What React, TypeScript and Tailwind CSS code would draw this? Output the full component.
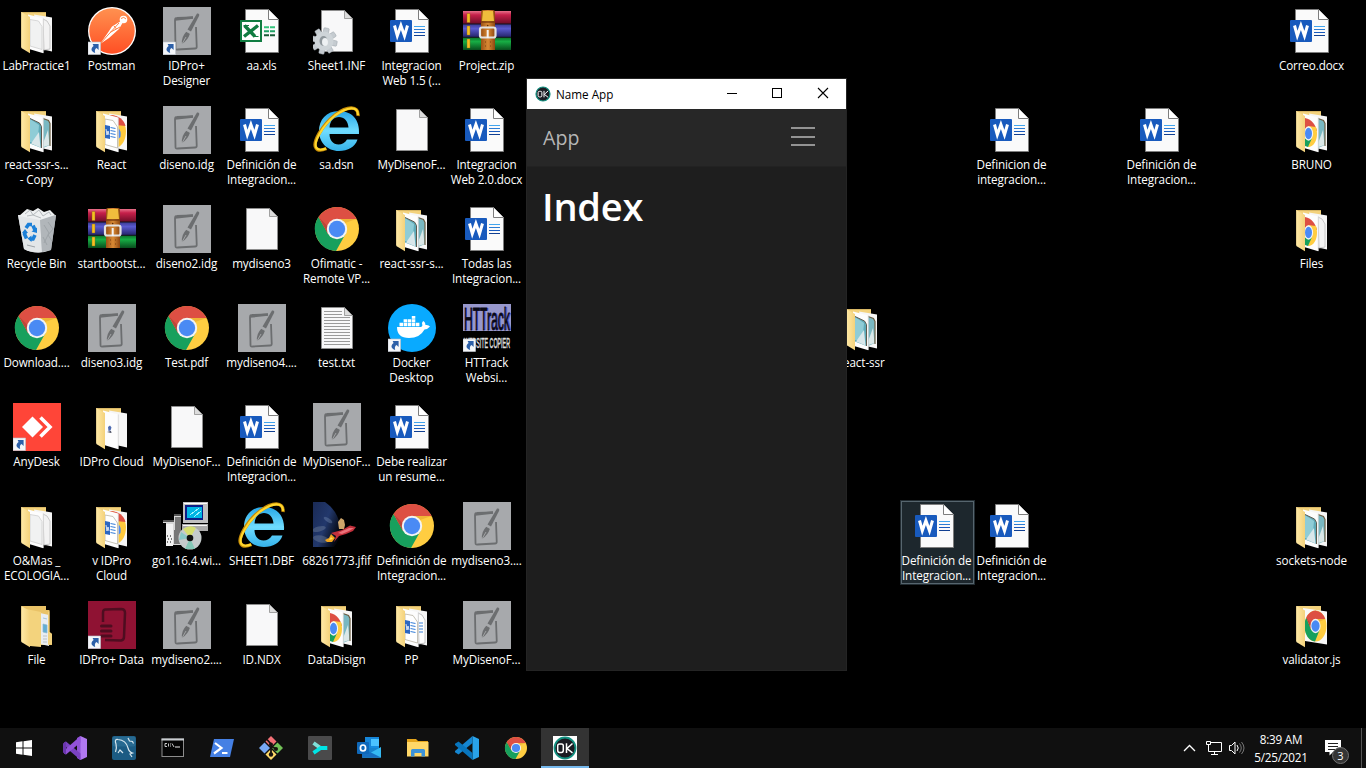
import React from "react";

type IconKind =
  | "folder" | "folderPics" | "folderMix" | "folderChrome" | "folderChromeBlank" | "folderOneChrome" | "folderDb" | "folderWord" | "folderFull"
  | "postman" | "idg" | "idgLink" | "excel" | "inf" | "word" | "rar" | "ie" | "page" | "bin" | "chrome"
  | "text" | "docker" | "httrack" | "anydesk" | "installer" | "photo" | "idproData";

type Item = { c: number; r: number; icon: IconKind; lines: string[]; selected?: boolean };

const items: Item[] = [
  { c: 0, r: 0, icon: "folder", lines: ["LabPractice1"] },
  { c: 1, r: 0, icon: "postman", lines: ["Postman"] },
  { c: 2, r: 0, icon: "idgLink", lines: ["IDPro+", "Designer"] },
  { c: 3, r: 0, icon: "excel", lines: ["aa.xls"] },
  { c: 4, r: 0, icon: "inf", lines: ["Sheet1.INF"] },
  { c: 5, r: 0, icon: "word", lines: ["Integracion", "Web 1.5 (..."] },
  { c: 6, r: 0, icon: "rar", lines: ["Project.zip"] },
  { c: 17, r: 0, icon: "word", lines: ["Correo.docx"] },
  { c: 0, r: 1, icon: "folderPics", lines: ["react-ssr-s...", "- Copy"] },
  { c: 1, r: 1, icon: "folderMix", lines: ["React"] },
  { c: 2, r: 1, icon: "idg", lines: ["diseno.idg"] },
  { c: 3, r: 1, icon: "word", lines: ["Definición de", "Integracion..."] },
  { c: 4, r: 1, icon: "ie", lines: ["sa.dsn"] },
  { c: 5, r: 1, icon: "page", lines: ["MyDisenoF..."] },
  { c: 6, r: 1, icon: "word", lines: ["Integracion", "Web 2.0.docx"] },
  { c: 13, r: 1, icon: "word", lines: ["Definicion de", "integracion..."] },
  { c: 15, r: 1, icon: "word", lines: ["Definición de", "Integracion..."] },
  { c: 17, r: 1, icon: "folderChrome", lines: ["BRUNO"] },
  { c: 0, r: 2, icon: "bin", lines: ["Recycle Bin"] },
  { c: 1, r: 2, icon: "rar", lines: ["startbootst..."] },
  { c: 2, r: 2, icon: "idg", lines: ["diseno2.idg"] },
  { c: 3, r: 2, icon: "page", lines: ["mydiseno3"] },
  { c: 4, r: 2, icon: "chrome", lines: ["Ofimatic -", "Remote VP..."] },
  { c: 5, r: 2, icon: "folderPics", lines: ["react-ssr-s..."] },
  { c: 6, r: 2, icon: "word", lines: ["Todas las", "Integracion..."] },
  { c: 17, r: 2, icon: "folderChromeBlank", lines: ["Files"] },
  { c: 0, r: 3, icon: "chrome", lines: ["Download...."] },
  { c: 1, r: 3, icon: "idg", lines: ["diseno3.idg"] },
  { c: 2, r: 3, icon: "chrome", lines: ["Test.pdf"] },
  { c: 3, r: 3, icon: "idg", lines: ["mydiseno4...."] },
  { c: 4, r: 3, icon: "text", lines: ["test.txt"] },
  { c: 5, r: 3, icon: "docker", lines: ["Docker", "Desktop"] },
  { c: 6, r: 3, icon: "httrack", lines: ["HTTrack", "Websi..."] },
  { c: 11, r: 3, icon: "folderPics", lines: ["react-ssr"] },
  { c: 0, r: 4, icon: "anydesk", lines: ["AnyDesk"] },
  { c: 1, r: 4, icon: "folderDb", lines: ["IDPro Cloud"] },
  { c: 2, r: 4, icon: "page", lines: ["MyDisenoF..."] },
  { c: 3, r: 4, icon: "word", lines: ["Definición de", "Integracion..."] },
  { c: 4, r: 4, icon: "idg", lines: ["MyDisenoF..."] },
  { c: 5, r: 4, icon: "word", lines: ["Debe realizar", "un resume..."] },
  { c: 0, r: 5, icon: "folder", lines: ["O&Mas _", "ECOLOGIA..."] },
  { c: 1, r: 5, icon: "folderMix", lines: ["v IDPro", "Cloud"] },
  { c: 2, r: 5, icon: "installer", lines: ["go1.16.4.wi..."] },
  { c: 3, r: 5, icon: "ie", lines: ["SHEET1.DBF"] },
  { c: 4, r: 5, icon: "photo", lines: ["68261773.jfif"] },
  { c: 5, r: 5, icon: "chrome", lines: ["Definición de", "Integracion..."] },
  { c: 6, r: 5, icon: "idg", lines: ["mydiseno3...."] },
  { c: 12, r: 5, icon: "word", lines: ["Definición de", "Integracion..."], selected: true },
  { c: 13, r: 5, icon: "word", lines: ["Definición de", "Integracion..."] },
  { c: 17, r: 5, icon: "folderPics", lines: ["sockets-node"] },
  { c: 0, r: 6, icon: "folderFull", lines: ["File"] },
  { c: 1, r: 6, icon: "idproData", lines: ["IDPro+ Data"] },
  { c: 2, r: 6, icon: "idg", lines: ["mydiseno2...."] },
  { c: 3, r: 6, icon: "page", lines: ["ID.NDX"] },
  { c: 4, r: 6, icon: "folderChrome", lines: ["DataDisign"] },
  { c: 5, r: 6, icon: "folderWord", lines: ["PP"] },
  { c: 6, r: 6, icon: "idg", lines: ["MyDisenoF..."] },
  { c: 17, r: 6, icon: "folderOneChrome", lines: ["validator.js"] },
];

function Shortcut() {
  return (
    <g>
      <rect x="0" y="35" width="12.6" height="12.6" fill="#f4f6f9" stroke="#b9c0c9" strokeWidth="0.6" />
      <path d="M4.600 37h6v6l-2-1.900c-1.700 1-2.100 2.500-1.400 4.900-3.600-.9-5.300-4-1.600-6.900z" fill="#2c5fa8" />
    </g>
  );
}

function ChromeBall({ r = 22 }: { r?: number }) {
  return (
    <g transform={`scale(${r / 22})`}>
      <circle r="22" fill="#ffcd41" />
      <path d="M-18.500 -12A22 22 0 0 0 -1 21.980L8.500 5 0 9-9 4.500z" fill="#17a05d" />
      <path d="M-18.500 -12A22 22 0 0 1 19.500 -10L0 -10-9 5z" fill="#dd4f43" />
      <path d="M0 -10H19.500L8 -6z" fill="#e4a52e" opacity=".6" />
      <path d="M-18.500 -12L-9 5-8.500 -2z" fill="#9c3b32" opacity=".5" />
      <circle r="10.200" fill="#f3f3f3" />
      <circle r="8.200" fill="#4a8af4" />
    </g>
  );
}

function Gear() {
  return (
    <g transform="translate(11 34)">
      {[0, 45, 90, 135, 180, 225, 270, 315].map((a) => (
        <rect key={a} x="-2.700" y="-13.200" width="5.400" height="7" rx="1" fill="#c5cbd0" stroke="#8e979e" strokeWidth=".4" transform={`rotate(${a + 12})`} />
      ))}
      <circle r="9.500" fill="#ced4d8" />
      <ellipse cx="-.5" rx="4" ry="5" fill="#8f979c" />
      <ellipse cx="1" cy="1" rx="3" ry="4" fill="#eef1f3" />
    </g>
  );
}

function Page({ children }: { children?: React.ReactNode }) {
  return (
    <g>
      <path d="M8.500 3.500H31.500L39.500 11.500V44.500H8.500z" fill="#f8f8f9" stroke="#8d8d8d" />
      <path d="M31.500 3.500V11.500H39.500z" fill="#dcdcdc" stroke="#8d8d8d" strokeWidth=".8" />
      {children}
    </g>
  );
}

function OfficePage({ children }: { children: React.ReactNode }) {
  return (
    <g>
      <path d="M7.500 2.500H30.500L40.500 12.500V45.500H7.500z" fill="#fafafa" stroke="#7d7d7d" />
      <path d="M30.500 2.500V12.500H40.500" fill="#fff" stroke="#7d7d7d" />
      {children}
    </g>
  );
}

function Folder({ front, back }: { front?: React.ReactNode; back?: React.ReactNode }) {
  return (
    <g>
      <path d="M8.300 5H33V40H8.300z" fill="#f3d27c" />
      <path d="M8.300 5.500H33" stroke="#d9b765" strokeWidth="1" />
      <path d="M21 7.500L39 10.500V44.500L28 42z" fill="#f6f6f6" />
      {back}
      <path d="M15 7.500L30.300 11.500V46.300L16 42z" fill="#fdfdfd" />
      <path d="M30.300 11.500V46" stroke="#cfcfcf" strokeWidth=".7" />
      {front}
      <path d="M8.300 5L17 10V46.300L8.300 41z" fill="url(#flap)" />
    </g>
  );
}

const miniWord = (
  <g>
    <path d="M17 13L25 14.500 29.500 21V42L17 38.500z" fill="#fff" stroke="#b9b4a4" strokeWidth=".8" />
    <path d="M17 19L22 20V33L17 32z" fill="#2c66c0" />
    <path d="M18 23l1 6 1-4 1 4" fill="none" stroke="#fff" strokeWidth=".8" />
    <path d="M22.500 21.500l5 1M22.500 24.500l5 1M22.500 27.500l5 1M22.500 30.500l5 1" stroke="#3c82d8" strokeWidth="1.200" />
  </g>
);
const miniPics = (
  <g>
    <path d="M17 12.500L26.500 17 28.500 20.500V42L17 37.500z" fill="#5faab8" />
    <path d="M17 13L26 19 24.500 37 17 36z" fill="#8fccd6" />
    <path d="M26 26L18 37.500 27.500 41.500z" fill="#d9e7ea" />
    <path d="M17 12.500L26.500 17 28.500 20.500V42" fill="none" stroke="#5f5a4e" strokeWidth="1" />
  </g>
);
const miniPicsBack = (
  <g>
    <path d="M30 12.500L35.500 14.500 37 17.500V39L30 42z" fill="#79b8c2" />
    <path d="M35 24L30.500 36V41L36.500 39z" fill="#dbe8e8" />
    <path d="M30 12.500L35.500 14.500 37 17.500V40" fill="none" stroke="#6b5c40" strokeWidth="1.200" />
  </g>
);
const miniPage = <path d="M17 12.500L25.500 14 29 19.500V42.500L17 39z" fill="#f1f2f2" stroke="#cfcfcf" strokeWidth=".8" />;
const miniPageBack = <path d="M30 12L34 14 37 19V42L31 43z" fill="#f3f3f3" stroke="#bdbdbd" strokeWidth=".8" />;
const halfChrome = (
  <g>
    <path d="M17 12C24 13 28 20 29 25H17z" fill="#dd4f43" />
    <path d="M20 20L28 21C31 31 27 41 20 41z" fill="#ffcd41" />
    <path d="M17 27L24 32 20 41 17 40z" fill="#17a05d" />
    <ellipse cx="20.500" cy="27.500" rx="4.600" ry="7.200" fill="#f4f4f4" />
    <ellipse cx="20.500" cy="27.500" rx="3.500" ry="5.800" fill="#4a8af4" />
  </g>
);

function RecycleBin() {
  return (
    <g>
      <path d="M5 10L43 10 38 45Q24 51 11 44z" fill="#c5c9cd" />
      <path d="M5 10L27 14 29 47Q18 48 11 44z" fill="#e3e6e8" />
      <path d="M27 14L43 10 38 45 29 47z" fill="#b1b6ba" />
      <path d="M6 11L14 4 20 6 25 3 31 7 37 5 42 10 27 15z" fill="#eef0f1" />
      <path d="M12 9L17 5 20 10 26 5 30 11 36 7 38 10M14 11L20 10 28 13" stroke="#b5babd" strokeWidth="1" fill="none" />
      <path d="M35 17L40 24 35 30 39 36M31 20L36 28 31 38M14 40L22 42M34 40L30 32" stroke="#9ea4a8" fill="none" />
      <g fill="none" stroke="#1c80d8" strokeWidth="3.600">
        <path d="M13 23L15.500 19.500H19" />
        <path d="M20 20.500L22 25" />
        <path d="M22 30L20 34H17" />
        <path d="M13.500 33.500L11.500 29 12.500 27" />
      </g>
      <path d="M18.500 37L14.500 33.500 18.500 30.500zM18.500 26.500L24 28 24 22.500zM9 28L12 24 15 28z" fill="#1c80d8" />
    </g>
  );
}

function Rar() {
  return (
    <g>
      <rect y="4" width="48" height="13" fill="url(#rarR)" />
      <rect y="17" width="48" height="13" fill="url(#rarB)" />
      <rect y="30" width="48" height="13" fill="url(#rarG)" />
      <path d="M0 17H48M0 30.300H48" stroke="#13131c" strokeWidth="1" />
      <path d="M4 6.500h3v9H4zM4 19h3v9H4zM4 32h3v9H4z" fill="#f6c021" stroke="#8b6a14" strokeWidth=".4" />
      <path d="M18 5Q18 3 20 3H30Q32 3 32 5V43H18z" fill="url(#strap)" />
      <path d="M20 4h10l1 10H19z" fill="#f0bd3c" />
      <path d="M18 15h14" stroke="#7a3d0e" strokeWidth="1.400" />
      <rect x="17" y="20.500" width="15.500" height="10" rx="2" fill="none" stroke="#e2e2e2" strokeWidth="2.200" />
      <path d="M24.700 23v8" stroke="#f3f3f3" strokeWidth="2" />
      <circle cx="24.700" cy="18.500" r=".8" fill="#5b2c0a" />
      <path d="M22 35h1M27 35h1M22 39h1M27 39h1" stroke="#7b400f" />
    </g>
  );
}

function IE() {
  return (
    <g>
      <path
        fillRule="evenodd"
        d="M46 28C47 14 39 5 26 5S6 14 6 25 14 45 26 45C35 45 42 41 44.500 33.500H34C32 37 29 38.500 25.500 38.500 20 38.500 16.500 34 16.500 28zM16.500 21.500C17 14.500 21 11 26 11S35 15 35.500 21.500z"
        fill="url(#ieBlue)"
      />
      <path d="M45 10C46 -1 34 0 22 9 9 19 -1 37 3 42 5 45 9 44.500 13.500 42.500" fill="none" stroke="#c48a05" strokeWidth="3.400" />
      <path d="M45 9C45 -1 34 1 22 9.500 9 20 0 37 3.500 42 5 44 9 44 13 42.500" fill="none" stroke="#ffd62d" strokeWidth="2.200" />
    </g>
  );
}

function Idg({ link }: { link?: boolean }) {
  return (
    <g>
      <rect width="48" height="48" fill="#a7a9ac" />
      <path d="M30 10.500L14 11Q12 11 12 13.500L12.500 41Q12.500 43 14.500 42.500L32 41.500Q34 41.500 33.700 39L33 20" fill="none" stroke="#6c6e70" strokeWidth="1.800" />
      <path d="M12 12.500L30 10.500" stroke="#6c6e70" strokeWidth="2.600" />
      <path d="M34 6.500Q37 6 36 9L28 24.500 24.500 22.500z" fill="#6c6e70" />
      <path d="M23.500 24.500L27 26.500Q25 33 19 37Q18 30 23.500 24.500z" fill="#6c6e70" />
      <path d="M19 37L23 30M22.500 24L28 27" stroke="#a7a9ac" strokeWidth=".9" />
      {link && <Shortcut />}
    </g>
  );
}

const icons: Record<IconKind, React.ReactNode> = {
  folder: <Folder front={miniPage} back={miniPageBack} />,
  folderPics: <Folder front={miniPics} back={miniPicsBack} />,
  folderMix: (
    <Folder
      front={miniWord}
      back={
        <g>
          <path d="M21 9C31 9 38 16 38 25S34 40 30 41V20z" fill="#ffc93c" />
          <path d="M22 9C31 9 36 14 37.500 20L28 19z" fill="#dd4f43" />
          <path d="M30.300 22Q33.500 25 32.500 31L30.300 33z" fill="#4a8af4" />
        </g>
      }
    />
  ),
  folderChrome: <Folder front={halfChrome} back={miniPicsBack} />,
  folderChromeBlank: <Folder front={halfChrome} back={miniPageBack} />,
  folderOneChrome: (
    <g>
      <path d="M8.300 5H33V40H8.300z" fill="#f3d27c" />
      <path d="M15 7L39 10.500V43.500L17 40z" fill="#f8f8f8" />
      <g transform="translate(27.500 25) scale(.5 .7)"><ChromeBall /></g>
      <path d="M8.300 5L17 9.500V46.300L8.300 41z" fill="url(#flap)" />
    </g>
  ),
  folderDb: (
    <Folder front={<g><path d="M20 24l2-1.500 1.500 2-1 3-2 .5z" fill="#4d6bb2" /><path d="M19 29l4-1 .5 2z" fill="#3b3f55" /></g>} />
  ),
  folderWord: (
    <Folder
      front={miniWord}
      back={<g><path d="M30 12L34 14 37 19V42L31 43z" fill="#fff" stroke="#b5b5b5" strokeWidth=".8" /><path d="M31 22h4M31 25h4M31 28h4M31 31h4" stroke="#3c82d8" strokeWidth="1.200" /></g>}
    />
  ),
  folderFull: (
    <g>
      <path d="M8.300 5H33V9L36.500 9V31L39 33V44L20 44 8.300 40z" fill="#e9c267" />
      <path d="M27 12L36 14V45L27 43z" fill="#e9edf2" />
      <path d="M30 23l4 1v8l-4-1zM30 17l4 1" fill="#62aed3" stroke="#8ab5cf" strokeWidth=".7" />
      <path d="M30 35h4M30 38h4M30 41h4" stroke="#aeb6bd" strokeWidth=".8" />
      <path d="M13 8L28 11V46L17 45z" fill="#f3d37d" />
      <path d="M8.300 5L17 10V46.300L8.300 41z" fill="url(#flap)" />
      <path d="M35 11L36.500 10V31L39 33V43L35 44z" fill="#f2d27d" />
    </g>
  ),
  postman: (
    <g>
      <circle cx="24" cy="24" r="24" fill="#fff" />
      <circle cx="24" cy="24" r="22.700" fill="url(#postman)" />
      <circle cx="35.500" cy="12.500" r="3.800" fill="#fff" />
      <path d="M33 11.500Q36 9 38 12" fill="none" stroke="#ff8646" strokeWidth="1" />
      <path d="M33 14L24 19.500 19 27 12 37 21 31 31 22 34.500 16z" fill="#fff" />
      <path d="M31 16L20 28 12.500 36.500M32 20L22 25.500M26 19L28.500 22" fill="none" stroke="#ff8144" strokeWidth="1" />
      <Shortcut />
    </g>
  ),
  idg: <Idg />,
  idgLink: <Idg link />,
  excel: (
    <OfficePage>
      <rect x="3" y="14" width="20" height="20" fill="#fff" stroke="#107c41" strokeWidth="2" />
      <path d="M6.500 18.500L17 29.500M20 18.500L6 29.500" stroke="#107c41" strokeWidth="3.400" />
      <path d="M5.500 18.500H11M15 29.500H20.500" stroke="#107c41" strokeWidth="1.200" />
      <path d="M26 20.200h5M32 20.200h5" stroke="#35c27b" strokeWidth="2" />
      <path d="M26 24.200h5M32 24.200h5" stroke="#21a366" strokeWidth="2" />
      <path d="M26 28.200h5M32 28.200h5" stroke="#185c37" strokeWidth="2" />
    </OfficePage>
  ),
  inf: <g><Page /><Gear /></g>,
  word: (
    <OfficePage>
      <rect x="2" y="13" width="22" height="22" rx="1" fill="#185abd" />
      <path d="M6.500 18.500L9.300 28.800 12.900 18.500 16.500 28.800 19.500 18.500" fill="none" stroke="#fff" strokeWidth="3" />
      <path d="M26 19.500h11" stroke="#41a5ee" />
      <path d="M26 22.500h11" stroke="#2b7cd3" />
      <path d="M26 25.500h11" stroke="#185abd" />
      <path d="M26 28.500h11" stroke="#103f91" />
    </OfficePage>
  ),
  rar: <Rar />,
  ie: <IE />,
  page: <Page />,
  bin: <RecycleBin />,
  chrome: <g transform="translate(24 24)"><ChromeBall /></g>,
  text: (
    <Page>
      <path d="M11 7.500h18M11 10.500h18M11 13.500h26M11 16.500h26M11 19.500h26M11 22.500h26M11 25.500h26M11 28.500h26M11 31.500h26M11 34.500h26M11 37.500h26M11 40.500h26" stroke="#9a9a9a" />
    </Page>
  ),
  docker: (
    <g>
      <circle cx="24" cy="24" r="24" fill="#09aaff" />
      <path d="M9 23H33Q35 22.500 34 19.500 34 17.500 35.500 17 37.500 18.500 37.500 21 40.500 20.500 42 22.500 40 25 36.500 25.500 32 34 21 34 9 34 9 23z" fill="#fff" />
      <path d="M11.500 18.800h3.500v3.500h-3.500zM15.600 18.800h3.500v3.500h-3.500zM19.700 18.800h3.500v3.500h-3.500zM23.800 18.800h3.500v3.500h-3.500zM27.900 18.800h3.500v3.500h-3.500zM15.600 15.200h3.500v3h-3.500zM19.700 15.200h3.500v3h-3.500zM23.800 15.200h3.500v3h-3.500zM23.800 12h3.500v2.800h-3.500z" fill="#fff" />
      <Shortcut />
    </g>
  ),
  httrack: (
    <g>
      <rect width="48" height="48" fill="#000" />
      <rect width="48" height="27" fill="#9797cc" />
      <g transform="translate(1 25.500) scale(.62 1.550)">
        <text x="1" y="0" fontSize="20" textLength="75" lengthAdjust="spacingAndGlyphs" fontFamily="Liberation Sans, sans-serif" fill="#5555c4">HTTrack</text>
        <text x="0" y="0" fontSize="20" textLength="74" lengthAdjust="spacingAndGlyphs" fontFamily="Liberation Sans, sans-serif" fill="#080814" stroke="#080814" strokeWidth=".5">HTTrack</text>
      </g>
      <g transform="translate(1 44) scale(.5 1.350)">
        <text x="0" y="0" fontSize="11" textLength="92" lengthAdjust="spacingAndGlyphs" fontFamily="Liberation Sans, sans-serif" fill="#dcdcdc" stroke="#dcdcdc" strokeWidth=".4">WEBSITE COPIER</text>
      </g>
      <Shortcut />
    </g>
  ),
  anydesk: (
    <g>
      <rect width="48" height="48" fill="#ff4538" />
      <path d="M19.500 13.500L30 24 19.500 34.500 9 24z" fill="#fff" />
      <path d="M27.500 14.500L37 24 27.500 33.500" fill="none" stroke="#fff" strokeWidth="3.600" />
      <Shortcut />
    </g>
  ),
  installer: (
    <g shapeRendering="crispEdges">
      <path d="M0 19H11V14H18V43H3V21H0z" fill="#d7d7d7" />
      <path d="M12 15H18V42H11z" fill="#777" />
      <path d="M3 22H10V44H3z" fill="#f2f2f2" />
      <path d="M4 34h1M7 34h1M5 37h1M8 37h1M4 40h1M7 40h1" stroke="#777" strokeWidth="1.500" />
      <path d="M0 19H11M11 13H18" stroke="#555" strokeWidth="2" />
      <path d="M20 0H45V21H20z" fill="#c0c0c0" />
      <path d="M21 1H44" stroke="#fff" />
      <rect x="22" y="3" width="18" height="15" fill="#0d1d86" />
      <rect x="24" y="5" width="15" height="11" fill="#00b5e5" />
      <path d="M27 13L36 6M31 15L38 9" stroke="#a0efff" />
      <path d="M19 22H45V29H19z" fill="#aaa" />
      <path d="M20 23H44" stroke="#f7f7f7" />
      <g shapeRendering="auto">
        <circle cx="27" cy="36" r="11.500" fill="#c5cbcc" />
        <path d="M27 36L20 27Q27 22 33 26z" fill="#d6df70" />
        <path d="M27 36L18 30 16 38z" fill="#88c9c8" />
        <path d="M27 36L22 47H32z" fill="#84c8b7" />
        <circle cx="27" cy="36" r="3.300" fill="#111" />
      </g>
    </g>
  ),
  photo: (
    <g>
      <rect width="43" height="45" fill="#000" />
      <path d="M0 0H12Q25 9 27 24 28 36 21 45H0z" fill="url(#earth)" />
      <ellipse cx="6" cy="27" rx="7" ry="2.500" fill="#8392a5" opacity=".35" transform="rotate(-15 6 27)" />
      <ellipse cx="8" cy="37" rx="8" ry="3.500" fill="#8392a5" opacity=".35" transform="rotate(12 8 37)" />
      <ellipse cx="15" cy="18" rx="5" ry="1.800" fill="#8fa5c8" opacity=".3" transform="rotate(35 15 18)" />
      <path d="M25 20L28 16 31 18 32 23 31 27 26 27z" fill="#cfa66b" />
      <path d="M18 31L29 28 37 23.500 43 25 40 29 33 32 26 34 21 40 23 34z" fill="#c3303c" />
      <path d="M25 31L36 26 41 26 36 29 29 32z" fill="#ec727a" />
      <path d="M12 38L16 36 18 32 22 36 19 40 14 40z" fill="#f2a51c" />
      <path d="M16 38L18 35 20 37z" fill="#ffe25a" />
    </g>
  ),
  idproData: (
    <g>
      <rect width="48" height="48" fill="#8f1233" />
      <path d="M15 21V12Q15 8 18 8.500L33 8Q37 8 37 12L36 36Q36 39 33 39.500L17 39" fill="none" stroke="#4e0d20" strokeWidth="2.500" />
      <path d="M13.500 25H23M13.500 30H23M13.500 35H23" stroke="#4e0d20" strokeWidth="3" strokeLinecap="round" />
      <Shortcut />
    </g>
  ),
};

function DesktopItem({ item }: { item: Item }) {
  return (
    <div className="flex w-[75px] flex-col items-center pt-[5px]" style={{ gridColumn: item.c + 1, gridRow: item.r + 1 }}>
      <div className={item.selected ? "h-[85px] w-[75px] border border-[#222c32] bg-[#222c32]" : "h-[85px] w-[75px] border border-transparent"}>
        <div className={item.selected ? "flex h-full flex-col items-center border border-[#56656e] bg-[#1d272d] pr-px" : "flex h-full flex-col items-center border border-transparent pr-px"}>
          <svg className="h-12 w-12 shrink-0" viewBox="0 0 48 48">{icons[item.icon]}</svg>
          <div className="mt-[3px] flex flex-col items-center pr-px text-[11.7px] leading-[15px] tracking-[-0.12px] whitespace-pre text-white">
            {item.lines.map((l) => <span key={l}>{l}</span>)}
          </div>
        </div>
      </div>
    </div>
  );
}

function OkLogo({ className }: { className: string }) {
  return (
    <svg className={className} viewBox="0 0 24 24">
      <circle cx="12" cy="12" r="10.500" fill="#1b1b22" stroke="#129080" strokeWidth="1.800" />
      <rect x="4.700" y="8" width="5.600" height="8.400" rx="1.800" fill="none" stroke="#fff" strokeWidth="1.500" />
      <path d="M13.500 7.300V17M19.500 7.500L14 12.500 19.500 16.800" fill="none" stroke="#fff" strokeWidth="1.500" />
    </svg>
  );
}

function AppWindow() {
  return (
    <section className="absolute top-[78px] left-[526px] flex h-[593px] w-[321px] flex-col border border-[#242424] bg-[#1e1e1e]">
      <header className="flex h-[30px] shrink-0 items-center bg-white text-black">
        <OkLogo className="mb-px ml-2 h-4 w-4" />
        <span className="ml-[5px] text-[11.7px] leading-4">Name App</span>
        <div className="ml-auto flex">
          <svg className="h-[30px] w-[46px]" viewBox="0 0 46 30"><path d="M19 14.500h10" stroke="#000" /></svg>
          <svg className="h-[30px] w-[46px]" viewBox="0 0 46 30"><rect x="18.500" y="9.500" width="9" height="9" fill="none" stroke="#000" /></svg>
          <svg className="h-[30px] w-[46px]" viewBox="0 0 46 30"><path d="M18 9L28 19M28 9L18 19" stroke="#000" strokeWidth="1.100" /></svg>
        </div>
      </header>
      <nav className="flex h-[58px] shrink-0 items-center border-b border-[#222] bg-[#272727] pr-[31px] pl-4">
        <span className="text-[19.6px] leading-6 text-[#b6b6b6]">App</span>
        <svg className="mb-[2px] ml-auto h-5 w-6" viewBox="0 0 24 20"><path d="M0 1h24M0 10h24M0 18h24" stroke="#939393" strokeWidth="2" /></svg>
      </nav>
      <main className="px-[15px] pt-[15px]">
        <h1 className="text-[38px] leading-[48px] font-semibold tracking-[-0.2px] text-white">Index</h1>
      </main>
    </section>
  );
}

const taskIcons: React.ReactNode[] = [
  <g key="vs">
    <path d="M17.500 0L24 3V21L17.500 24 15 22V3z" fill="#b179f1" />
    <path d="M17.500 0V24L14 22V2z" fill="#8f54d6" />
    <path d="M1 6.500L3 5.500 17.500 17.500V24L4 12.500z" fill="#7a42c2" />
    <path d="M1 17.500L3 18.500 17.500 6.500V0L1 14.500z" fill="#9252d9" />
    <path d="M0 7.500L3 5.500V18.500L0 16.500z" fill="#6b37ad" />
  </g>,
  <g key="mysql">
    <rect width="24" height="24" rx="2" fill="#1b5b83" />
    <rect x=".5" y=".5" width="23" height="10" rx="2" fill="#32749b" opacity=".6" />
    <path d="M3.500 16Q5 12 4 8 2 3 6 3.500 14 4 16 12 17 16 20.500 17L18 18 20 21M6 17L8 14 11 17M16 2l1.500 3 3 .5 1 2" fill="none" stroke="#d6e5ed" strokeWidth="1.200" />
  </g>,
  <g key="cmd">
    <rect x="1" y="3" width="21.500" height="17.500" fill="#050505" stroke="#8d8d8d" strokeWidth="1" />
    <path d="M.5 3.500H23" stroke="#c9cdd1" strokeWidth="2" />
    <path d="M6 7.500H4V10.500H6M7.500 7.500v3M9.500 7.500v1M9.500 9.500v1M11 7.500l2 3.500" fill="none" stroke="#ddd" strokeWidth=".9" />
    <path d="M14 11h5" stroke="#eee" />
  </g>,
  <g key="ps">
    <path d="M4 3H24L20 21H0z" fill="#4580e4" />
    <path d="M5 7L11.500 12 4 17.500" fill="none" stroke="#fff" strokeWidth="2.200" />
    <path d="M12 17h5.500" stroke="#fff" strokeWidth="2" />
  </g>,
  <g key="git">
    <path d="M12 0L17.500 5.500 12 11 6.500 5.500z" fill="#f37076" />
    <path d="M5.500 6.500L11 12 5.500 17.500 0 12z" fill="#78a9f5" />
    <path d="M18.500 6.500L24 12 18.500 17.500 13 12z" fill="#72c157" />
    <path d="M12 13L17.500 18.500 12 24 6.500 18.500z" fill="#ffd969" />
    <path d="M8 3.500L12 8V19M12 10L17 13" fill="none" stroke="#17110f" strokeWidth="1.800" />
    <circle cx="12" cy="8.500" r="2" fill="#17110f" /><circle cx="12" cy="18.500" r="2.200" fill="#17110f" /><circle cx="17" cy="13" r="2" fill="#17110f" />
  </g>,
  <g key="term">
    <rect width="24" height="24" rx="1" fill="#4a4a4b" />
    <path d="M5.500 7L12.500 12" stroke="#80dfd9" strokeWidth="3.800" />
    <path d="M19.300 12L12.800 12 5.500 16.800" fill="none" stroke="#00e5e6" strokeWidth="3.800" />
  </g>,
  <g key="outlook">
    <rect x="8" y="1" width="14" height="13" fill="#1686d9" />
    <rect x="14" y="3" width="8" height="7" fill="#4bc3ff" />
    <rect x="14" y="10" width="8" height="5" fill="#158de0" />
    <path d="M5 12L24 12V21.500H5z" fill="#1683ce" />
    <path d="M5 21.500L24 11V21.500z" fill="#35b9f1" /><path d="M5 12L24 21.500H5z" fill="#166fc0" />
    <rect y="6" width="12" height="12" rx="1" fill="#0f68b9" />
    <ellipse cx="6" cy="12" rx="2.600" ry="3" fill="none" stroke="#fff" strokeWidth="1.700" />
  </g>,
  <g key="explorer">
    <path d="M1 3H10L12 5H22V20H1z" fill="#e5a51c" />
    <path d="M1 6H22.500V20.500H1z" fill="#ffd768" />
    <path d="M5 14.500Q5 13 6.500 13H17.500Q19 13 19 14.500V20.500H15.500V17H8.500V20.500H5z" fill="#3b92d8" />
  </g>,
  <g key="code">
    <path d="M17.500 0L24 3V21L17.500 24z" fill="#29a3ea" />
    <path d="M17.500 0V7L3.500 18.500 0 16.200 0 15z" fill="#1586d1" />
    <path d="M17.500 24V17L3.500 5.500 0 7.800 0 9z" fill="#0875bd" />
  </g>,
  <g key="chrome" transform="translate(12 12)"><ChromeBall r={11} /></g>,
];

function Taskbar() {
  return (
    <footer className="relative flex h-10 shrink-0 items-center bg-[#101010] text-white">
      <div className="mr-[3px] flex h-10 w-12 items-center justify-center">
        <svg className="h-4 w-4" viewBox="0 0 16 16"><path d="M0 2.300L6.500 1.300V7.500H0zM7.500 1.200L16 0V7.500H7.500zM0 8.500H6.500V14.700L0 13.700zM7.500 8.500H16V16L7.500 14.800z" fill="#fff" /></svg>
      </div>
      <div className="flex gap-px">
        {taskIcons.map((icon, i) => (
          <div key={i} className="flex h-10 w-12 items-center justify-center">
            <svg className="h-6 w-6" viewBox="0 0 24 24">{icon}</svg>
          </div>
        ))}
        <div className="flex h-10 w-12 items-center justify-center border-b-2 border-[#76b9ed] bg-[#333] pt-[2px]">
          <div className="h-6 w-6 bg-white"><OkLogo className="h-6 w-6" /></div>
        </div>
      </div>
      <div className="ml-auto flex h-10 items-center">
        <svg className="h-10 w-16" viewBox="0 0 64 40" fill="none" stroke="#fff">
          <path d="M1 23L6.500 17.500 12 23" strokeWidth="1.300" />
          <path d="M28 14.500H38.500V23.500H25.500V19M31.500 24v2.500M28 26.500h7" />
          <path d="M23.500 13.500h4v3h-4zM25.500 17v3" />
          <path d="M46.500 17.500h2l3.500-3.500v12l-3.500-3.500h-2z" />
          <path d="M54 17Q56.500 20 54 23" />
          <path d="M56.500 15.500Q60 20 56.500 24.500M58.500 14Q63.500 20 58.500 26" stroke="#777" />
        </svg>
        <div className="ml-[3px] flex w-[62px] flex-col items-center text-[11.7px] leading-[18px] tracking-[-0.2px]">
          <span>8:39 AM</span>
          <span>5/25/2021</span>
        </div>
        <svg className="ml-[9px] h-10 w-8" viewBox="0 0 32 40">
          <path d="M4 12H20V24H12L8.500 27.500V24H4z" fill="#fff" />
          <path d="M7 15.500h10M7 18.500h10M7 21.500h7" stroke="#202020" />
          <circle cx="19.500" cy="27.500" r="8" fill="#353535" stroke="#737373" />
          <text x="19.500" y="31.500" textAnchor="middle" fontSize="11" fontFamily="Open Sans, sans-serif" fill="#fff">3</text>
        </svg>
        <div className="mr-1 ml-[8px] h-10 w-px bg-[#555]" />
      </div>
    </footer>
  );
}

function Gradients() {
  return (
    <svg className="absolute h-0 w-0">
      <defs>
        <linearGradient id="flap" x2="1"><stop stopColor="#ffe9a6" /><stop offset="1" stopColor="#f4d27b" /></linearGradient>
        <linearGradient id="rarR" x2="0" y2="1"><stop stopColor="#e8718a" /><stop offset=".3" stopColor="#c6204a" /><stop offset="1" stopColor="#6b0c26" /></linearGradient>
        <linearGradient id="rarB" x2="0" y2="1"><stop stopColor="#39398e" /><stop offset=".35" stopColor="#5a5ad0" /><stop offset="1" stopColor="#25256b" /></linearGradient>
        <linearGradient id="rarG" x2="0" y2="1"><stop stopColor="#0a6a27" /><stop offset=".35" stopColor="#17ad44" /><stop offset="1" stopColor="#084d1d" /></linearGradient>
        <linearGradient id="strap" x2="1"><stop stopColor="#9b5114" /><stop offset=".5" stopColor="#d98a34" /><stop offset="1" stopColor="#8d4610" /></linearGradient>
        <linearGradient id="ieBlue" x2="0" y2="1"><stop stopColor="#27a6e6" /><stop offset=".5" stopColor="#6fdcff" /><stop offset="1" stopColor="#35b2ea" /></linearGradient>
        <linearGradient id="postman" x2="0" y2="1"><stop stopColor="#ff9150" /><stop offset="1" stopColor="#ff4f24" /></linearGradient>
        <linearGradient id="earth" x2="1" y2=".6"><stop stopColor="#1a2a55" /><stop offset=".55" stopColor="#22386c" /><stop offset="1" stopColor="#04070f" /></linearGradient>
      </defs>
    </svg>
  );
}

export default function App() {
  return (
    <div className="relative flex h-[768px] w-[1366px] flex-col overflow-hidden bg-black font-['Open_Sans','Noto_Sans',sans-serif]">
      <Gradients />
      <div className="grid h-[728px] shrink-0 auto-rows-[99px] grid-cols-[repeat(18,75px)] content-start">
        {items.map((it) => <DesktopItem key={`${it.c}-${it.r}`} item={it} />)}
      </div>
      <AppWindow />
      <Taskbar />
    </div>
  );
}
